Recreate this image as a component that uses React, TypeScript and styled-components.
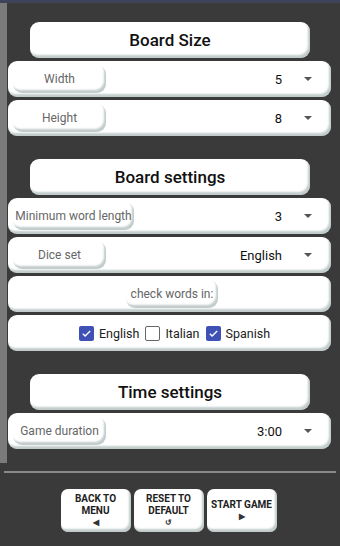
import styled, { createGlobalStyle } from "styled-components";

const GlobalStyle = createGlobalStyle`
  html, body {
    margin: 0;
    padding: 0;
    background: #3a3a3a;
    font-family: Roboto, "Liberation Sans", sans-serif;
  }
`;

const Screen = styled.div`
  width: 340px;
  height: 546px;
  background: #3a3a3a;
  display: flex;
  flex-direction: column;
  overflow: hidden;
`;

const TopBar = styled.div`
  height: 3px;
  background: #3e4359;
`;

const ScrollArea = styled.div`
  display: flex;
  height: 460px;
`;

const Scrollbar = styled.div`
  width: 7px;
  background: #7b7b7b;
`;

const Content = styled.div`
  flex: 1;
  padding: 19px 9px 0 1px;
  display: flex;
  flex-direction: column;
`;

const Section = styled.div`
  display: flex;
  flex-direction: column;
  gap: 3px;
  margin-bottom: 23px;
`;

const Card = styled.div`
  background: #fff;
  border-radius: 9px;
  box-shadow: inset -2px -3px 2px rgba(120, 140, 140, 0.45);
`;

const Title = styled(Card)`
  margin: 0 21px 0 22px;
  height: 36px;
  display: flex;
  align-items: center;
  justify-content: center;
  font-size: 17px;
  font-weight: 500;
  color: #111;
`;

const Row = styled(Card)<{ $center?: boolean }>`
  height: 36px;
  display: flex;
  align-items: center;
  justify-content: ${(p) => (p.$center ? "center" : "flex-start")};
  padding: 0 0 0 5px;
  box-sizing: border-box;
`;

const Label = styled.div<{ $w?: number }>`
  width: ${(p) => p.$w ?? 93}px;
  height: 28px;
  border-radius: 9px;
  background: #fff;
  box-shadow: inset -2px -3px 2px rgba(120, 140, 140, 0.45);
  display: flex;
  align-items: center;
  justify-content: center;
  font-size: 12px;
  color: #666;
  white-space: nowrap;
  flex-shrink: 0;
`;

const Value = styled.div`
  margin-left: auto;
  font-size: 13px;
  color: #111;
`;

const Arrow = styled.div`
  width: 0;
  height: 0;
  border-left: 4px solid transparent;
  border-right: 4px solid transparent;
  border-top: 4px solid #555;
  margin: 0 19px 0 22px;
`;

const Checks = styled.div`
  display: flex;
  align-items: center;
  gap: 6px;
  font-size: 12.5px;
  color: #222;
  padding-left: 5px;
`;

const Box = styled.span<{ $on?: boolean }>`
  width: 15px;
  height: 15px;
  box-sizing: border-box;
  border-radius: 2px;
  background: ${(p) => (p.$on ? "#3f51b5" : "#fff")};
  border: ${(p) => (p.$on ? "none" : "1.5px solid #666")};
  display: inline-flex;
  align-items: center;
  justify-content: center;
`;

const CheckItem = styled.label`
  display: flex;
  align-items: center;
  gap: 5px;
`;

const Divider = styled.div`
  height: 2px;
  background: #8a8a8a;
  margin: 8px 4px 0 4px;
`;

const Buttons = styled.div`
  display: flex;
  justify-content: center;
  gap: 3px;
  margin-top: 16px;
  padding-right: 3px;
`;

const Btn = styled(Card)`
  width: 70px;
  height: 43px;
  display: flex;
  flex-direction: column;
  align-items: center;
  justify-content: center;
  font-size: 10px;
  font-weight: 700;
  color: #222;
  text-align: center;
  line-height: 12px;
  border-radius: 7px;
`;

const Glyph = styled.span`
  font-size: 8px;
  line-height: 11px;
  color: #333;
`;

const Check = ({ on }: { on?: boolean }) => (
  <Box $on={on}>
    {on && (
      <svg width="11" height="11" viewBox="0 0 24 24">
        <path d="M4 12.5l5 5L20 6.5" stroke="#fff" strokeWidth="3" fill="none" />
      </svg>
    )}
  </Box>
);

const Select = ({ label, value, w }: { label: string; value: string; w?: number }) => (
  <Row>
    <Label $w={w}>{label}</Label>
    <Value>{value}</Value>
    <Arrow />
  </Row>
);

export default function App() {
  return (
    <Screen>
      <GlobalStyle />
      <TopBar />
      <ScrollArea>
        <Scrollbar />
        <Content>
          <Section>
            <Title>Board Size</Title>
            <Select label="Width" value="5" />
            <Select label="Height" value="8" />
          </Section>
          <Section>
            <Title>Board settings</Title>
            <Select label="Minimum word length" value="3" w={121} />
            <Select label="Dice set" value="English" />
            <Row $center>
              <Label $w={92}>check words in:</Label>
            </Row>
            <Row $center>
              <Checks>
                <CheckItem>
                  <Check on />
                  English
                </CheckItem>
                <CheckItem>
                  <Check />
                  Italian
                </CheckItem>
                <CheckItem>
                  <Check on />
                  Spanish
                </CheckItem>
              </Checks>
            </Row>
          </Section>
          <Section>
            <Title>Time settings</Title>
            <Select label="Game duration" value="3:00" />
          </Section>
        </Content>
      </ScrollArea>
      <Divider />
      <Buttons>
        <Btn>
          BACK TO
          <br />
          MENU
          <Glyph>◀</Glyph>
        </Btn>
        <Btn>
          RESET TO
          <br />
          DEFAULT
          <Glyph>↺</Glyph>
        </Btn>
        <Btn>
          START GAME
          <Glyph>▶</Glyph>
        </Btn>
      </Buttons>
    </Screen>
  );
}
